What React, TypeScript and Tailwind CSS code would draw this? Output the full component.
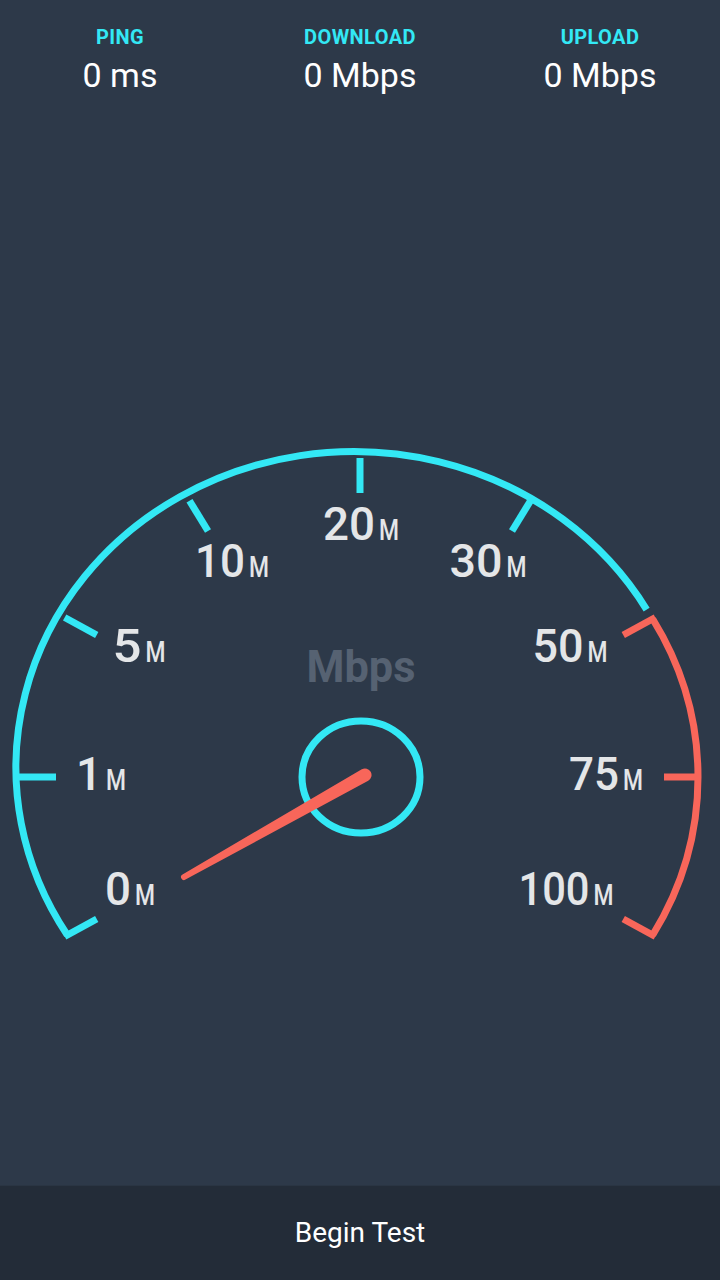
import React from 'react';

const CYAN = '#33e8f5';
const CORAL = '#f8665a';

// gauge geometry (the dial is a little wider than it is tall)
const CX = 360;
const CY = 775;
const RX = 338;
const RY = 316;

const pt = (deg: number, rx = RX, ry = RY) => {
  const a = (deg * Math.PI) / 180;
  return { x: CX + rx * Math.cos(a), y: CY - ry * Math.sin(a) };
};

const ticks = [210, 180, 150, 120, 90, 60, 30, 0, -30];

// x = centre of the whole label, y = baseline, w = full width
const labels = [
  { n: '0', x: 130, y: 903, w: 50 },
  { n: '1', x: 101, y: 788, w: 50 },
  { n: '5', x: 139, y: 660, w: 53 },
  { n: '10', x: 232, y: 575, w: 74 },
  { n: '20', x: 361, y: 538, w: 76 },
  { n: '30', x: 488, y: 575, w: 77 },
  { n: '50', x: 570, y: 660, w: 75 },
  { n: '75', x: 606, y: 788, w: 74 },
  { n: '100', x: 566, y: 903, w: 95 },
];

const FONT = "Roboto, 'Liberation Sans', sans-serif";

const Stat = ({ label, value }: { label: string; value: string }) => (
  <div className="flex flex-col items-center">
    <span className="text-[20px] leading-[22px] font-bold tracking-[0.4px]" style={{ color: CYAN }}>{label}</span>
    <span className="mt-[8px] text-[34px] leading-[38px] text-white">{value}</span>
  </div>
);

const Gauge = () => {
  const start = pt(210);
  const cyanEnd = pt(32);
  const redStart = pt(30);
  const redEnd = pt(-30);

  return (
    <svg width="720" height="600" viewBox="0 400 720 600" className="block">
      <path
        d={`M ${start.x} ${start.y} A ${RX} ${RY} 0 1 1 ${cyanEnd.x} ${cyanEnd.y}`}
        fill="none"
        stroke={CYAN}
        strokeWidth={7}
      />
      <path
        d={`M ${redStart.x} ${redStart.y} A ${RX} ${RY} 0 0 1 ${redEnd.x} ${redEnd.y}`}
        fill="none"
        stroke={CORAL}
        strokeWidth={7}
      />
      {ticks.map((t) => {
        const o = pt(t, RX + 3, RY + 3);
        const i = pt(t, RX - 34, RY - 32);
        return (
          <line key={t} x1={o.x} y1={o.y} x2={i.x} y2={i.y} stroke={t <= 30 ? CORAL : CYAN} strokeWidth={7} />
        );
      })}

      {labels.map((l) => {
        const left = l.x - l.w / 2;
        const right = l.x + l.w / 2;
        return (
          <g key={l.n} fill="#e4e6e8" fontFamily={FONT} fontWeight={500}>
            <text x={left} y={l.y} fontSize={46} textLength={l.w - 24} lengthAdjust="spacingAndGlyphs">
              {l.n}
            </text>
            <text x={right - 20} y={l.y} fontSize={29} textLength={20} lengthAdjust="spacingAndGlyphs">
              M
            </text>
          </g>
        );
      })}

      <text
        x={361}
        y={680}
        textAnchor="middle"
        textLength={109}
        lengthAdjust="spacingAndGlyphs"
        fill="#566272"
        fontFamily={FONT}
        fontWeight={700}
        fontSize={44}
      >
        Mbps
      </text>

      <ellipse cx={361} cy={775} rx={59} ry={56} fill="none" stroke={CYAN} strokeWidth={7} />

      <path
        d="M 182.5 872.4 L 361.8 767.3 A 6.5 6.5 0 0 1 368.2 778.7 L 185.5 877.6 A 3 3 0 0 1 182.5 872.4 Z"
        fill={CORAL}
      />
    </svg>
  );
};

export default function App() {
  return (
    <div className="h-screen w-full flex flex-col bg-[#2d3949]" style={{ fontFamily: FONT }}>
      <div className="grid grid-cols-3 pt-[26px]">
        <Stat label="PING" value="0 ms" />
        <Stat label="DOWNLOAD" value="0 Mbps" />
        <Stat label="UPLOAD" value="0 Mbps" />
      </div>

      <div className="mt-[308px]">
        <Gauge />
      </div>

      <button className="mt-auto h-[95px] w-full flex items-center justify-center bg-[#232c38] border-t border-[#2a3543] text-[28px] text-white">
        Begin Test
      </button>
    </div>
  );
}
